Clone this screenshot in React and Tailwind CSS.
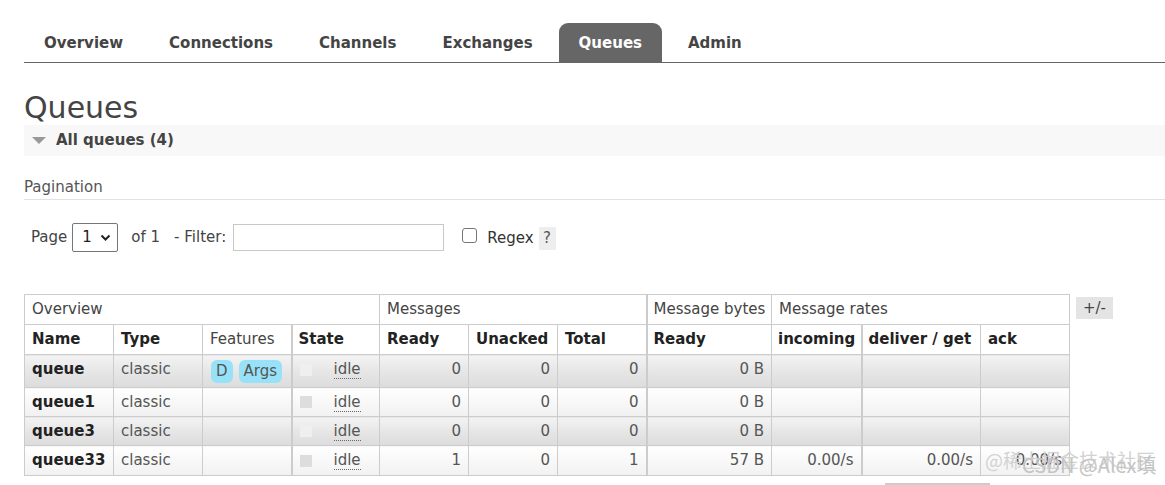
import React from "react";

const tabs = ["Overview", "Connections", "Channels", "Exchanges", "Queues", "Admin"];

const rows = [
  { name: "queue", type: "classic", badges: true, ready: "0", unacked: "0", total: "0", bytes: "0 B", inc: "", del: "", ack: "" },
  { name: "queue1", type: "classic", badges: false, ready: "0", unacked: "0", total: "0", bytes: "0 B", inc: "", del: "", ack: "" },
  { name: "queue3", type: "classic", badges: false, ready: "0", unacked: "0", total: "0", bytes: "0 B", inc: "", del: "", ack: "" },
  { name: "queue33", type: "classic", badges: false, ready: "1", unacked: "0", total: "1", bytes: "57 B", inc: "0.00/s", del: "0.00/s", ack: "0.00/s" },
];

const widths = [89, 89, 89, 88, 89, 89, 89, 125, 90, 119, 89];

export default function App() {
  return (
    <div
      className="relative w-[1165px] h-[485px] overflow-hidden bg-white pl-[24px] text-[15px] text-[#444]"
      style={{ fontFamily: '"DejaVu Sans", Verdana, "Noto Sans CJK SC", sans-serif' }}
    >
      {/* nav */}
      <div className="pt-[23px]">
        <ul className="flex gap-[6px] border-b border-[#666]">
          {tabs.map((t) => (
            <li
              key={t}
              className={
                t === "Queues"
                  ? "h-[39px] px-[20px] pt-[2px] flex items-center font-bold rounded-t-[9px] bg-[#666] text-white"
                  : "h-[39px] px-[20px] pt-[2px] flex items-center font-bold text-[#444]"
              }
            >
              {t}
            </li>
          ))}
        </ul>
      </div>

      <h1 className="mt-[28px] text-[30px] leading-[34px] font-normal text-[#444]">Queues</h1>

      <div className="h-[31px] bg-[#f8f8f8] flex items-center pl-[8px]">
        <svg width="14" height="8" viewBox="0 0 14 8" className="mr-[10px]">
          <polygon points="0,0 14,0 7,7" fill="#999" />
        </svg>
        <span className="font-bold text-[#444]">All queues (4)</span>
      </div>

      <div className="mt-[22px] pb-[3px] border-b border-[#e2e2e2] leading-[18px] text-[#555]">Pagination</div>

      <div className="mt-[23px] flex items-center h-[29px] pl-[7px] text-[#444]">
        <span>Page</span>
        <div className="ml-[5px] w-[46px] h-[29px] border border-[#767676] rounded-[2px] flex items-center pl-[9px] text-[#222]">
          <span>1</span>
          <svg width="11" height="8" viewBox="0 0 11 8" className="ml-[8px]">
            <polyline points="1.5,1.5 5.5,5.5 9.5,1.5" fill="none" stroke="#222" strokeWidth="2" />
          </svg>
        </div>
        <span className="ml-[13px]">of 1</span>
        <span className="ml-[14px]">- Filter:</span>
        <div className="ml-[7px] w-[211px] h-[27px] border border-[#c8c8c8] bg-white"></div>
        <div className="ml-[18px] w-[15px] h-[15px] border border-[#767676] rounded-[3px] -mt-[4px]"></div>
        <span className="ml-[10px] mt-[2px] text-[#333]">Regex</span>
        <span className="ml-[5px] mt-[2px] w-[17px] h-[23px] bg-[#eeeeee] flex items-center justify-center text-[#555]">?</span>
      </div>

      <div className="mt-[42px] flex items-start">
        <table className="table-fixed border-collapse w-[1045px]">
          <colgroup>
            {widths.map((w, i) => (
              <col key={i} style={{ width: w }} />
            ))}
          </colgroup>
          <thead>
            <tr className="h-[30px]">
              <th colSpan={4} className="border border-[#ccc] text-left font-normal px-[7px] text-[#444]">Overview</th>
              <th colSpan={3} className="border border-[#ccc] text-left font-normal px-[7px] text-[#444]">Messages</th>
              <th className="border border-[#ccc] border-l-2 text-left font-normal px-[6px] text-[#444] whitespace-nowrap">Message bytes</th>
              <th colSpan={3} className="border border-[#ccc] text-left font-normal px-[7px] text-[#444]">Message rates</th>
            </tr>
            <tr className="h-[30px]">
              <th className="border border-[#ccc] text-left font-bold px-[7px] text-[#222]">Name</th>
              <th className="border border-[#ccc] text-left font-bold px-[7px] text-[#222]">Type</th>
              <th className="border border-[#ccc] text-left font-normal px-[7px] text-[#444]">Features</th>
              <th className="border border-[#ccc] border-l-2 text-left font-bold px-[6px] text-[#222]">State</th>
              <th className="border border-[#ccc] text-left font-bold px-[7px] text-[#222]">Ready</th>
              <th className="border border-[#ccc] text-left font-bold px-[7px] text-[#222]">Unacked</th>
              <th className="border border-[#ccc] text-left font-bold px-[7px] text-[#222]">Total</th>
              <th className="border border-[#ccc] border-l-2 text-left font-bold px-[6px] text-[#222]">Ready</th>
              <th className="border border-[#ccc] text-left font-bold px-[6px] text-[#222] whitespace-nowrap">incoming</th>
              <th className="border border-[#ccc] border-l-2 text-left font-bold px-[6px] text-[#222] whitespace-nowrap">deliver / get</th>
              <th className="border border-[#ccc] text-left font-bold px-[7px] text-[#222]">ack</th>
            </tr>
          </thead>
          <tbody>
            {rows.map((r, i) => {
              const alt = i % 2 === 0;
              const bg = alt
                ? "bg-gradient-to-b from-[#f3f3f3] via-[#e6e6e6] to-[#dcdcdc]"
                : "bg-gradient-to-b from-[#ffffff] to-[#f1f1f1]";
              const td = "border border-[#ccc] px-[7px] " + bg;
              return (
                <tr key={r.name} className={i === 0 ? "h-[33px]" : i === 3 ? "h-[30px]" : "h-[29px]"}>
                  <td className={td + " font-bold text-[#222]" + (i === 0 ? " pb-[3px]" : "")}>{r.name}</td>
                  <td className={td + " text-[#555]" + (i === 0 ? " pb-[3px]" : "")}>{r.type}</td>
                  <td className={td + " !px-[8px]"}>
                    {r.badges && (
                      <div className="flex gap-[6px]">
                        <span className="px-[5px] h-[23px] leading-[23px] rounded-[6px] bg-[#97e2f8] text-[#555]">D</span>
                        <span className="px-[5px] h-[23px] leading-[23px] rounded-[6px] bg-[#97e2f8] text-[#555]">Args</span>
                      </div>
                    )}
                  </td>
                  <td className={td + " border-l-2" + (i === 0 ? " pb-[3px]" : "")}>
                    <div className="flex items-center">
                      <span className={"w-[12px] h-[12px] " + (alt ? "bg-[#efefef]" : "bg-[#dddddd]")}></span>
                      <span className="ml-[22px] text-[#555] leading-[18px] border-b border-dotted border-[#666]">idle</span>
                    </div>
                  </td>
                  <td className={td + " text-right text-[#555]" + (i === 0 ? " pb-[3px]" : "")}>{r.ready}</td>
                  <td className={td + " text-right text-[#555]" + (i === 0 ? " pb-[3px]" : "")}>{r.unacked}</td>
                  <td className={td + " text-right text-[#555]" + (i === 0 ? " pb-[3px]" : "")}>{r.total}</td>
                  <td className={td + " border-l-2 text-right text-[#555]" + (i === 0 ? " pb-[3px]" : "")}>{r.bytes}</td>
                  <td className={td + " text-right text-[#555]"}>{r.inc}</td>
                  <td className={td + " border-l-2 text-right text-[#555]"}>{r.del}</td>
                  <td className={td + " text-right text-[#555]"}>{r.ack}</td>
                </tr>
              );
            })}
          </tbody>
        </table>
        <span className="ml-[6px] mt-[3px] px-[7px] h-[22px] leading-[22px] bg-[#e4e4e4] text-[#444]">+/-</span>
      </div>

      {/* watermark overlay */}
      <div className="absolute left-[985px] top-[446px] text-[19px] text-[#d2d2d2] whitespace-nowrap pointer-events-none"
        style={{ fontFamily: '"Noto Sans CJK SC", sans-serif' }}>
        @稀土掘金技术社区
      </div>
      <div className="absolute left-[1022px] top-[450px] text-[20px] text-[#c4c4c4] whitespace-nowrap pointer-events-none"
        style={{ fontFamily: '"Noto Sans CJK SC", sans-serif' }}>
        CSDN @Alex填
      </div>
      <div className="absolute left-[885px] top-[483px] w-[105px] h-[2px] bg-[#ccc]"></div>
    </div>
  );
}
